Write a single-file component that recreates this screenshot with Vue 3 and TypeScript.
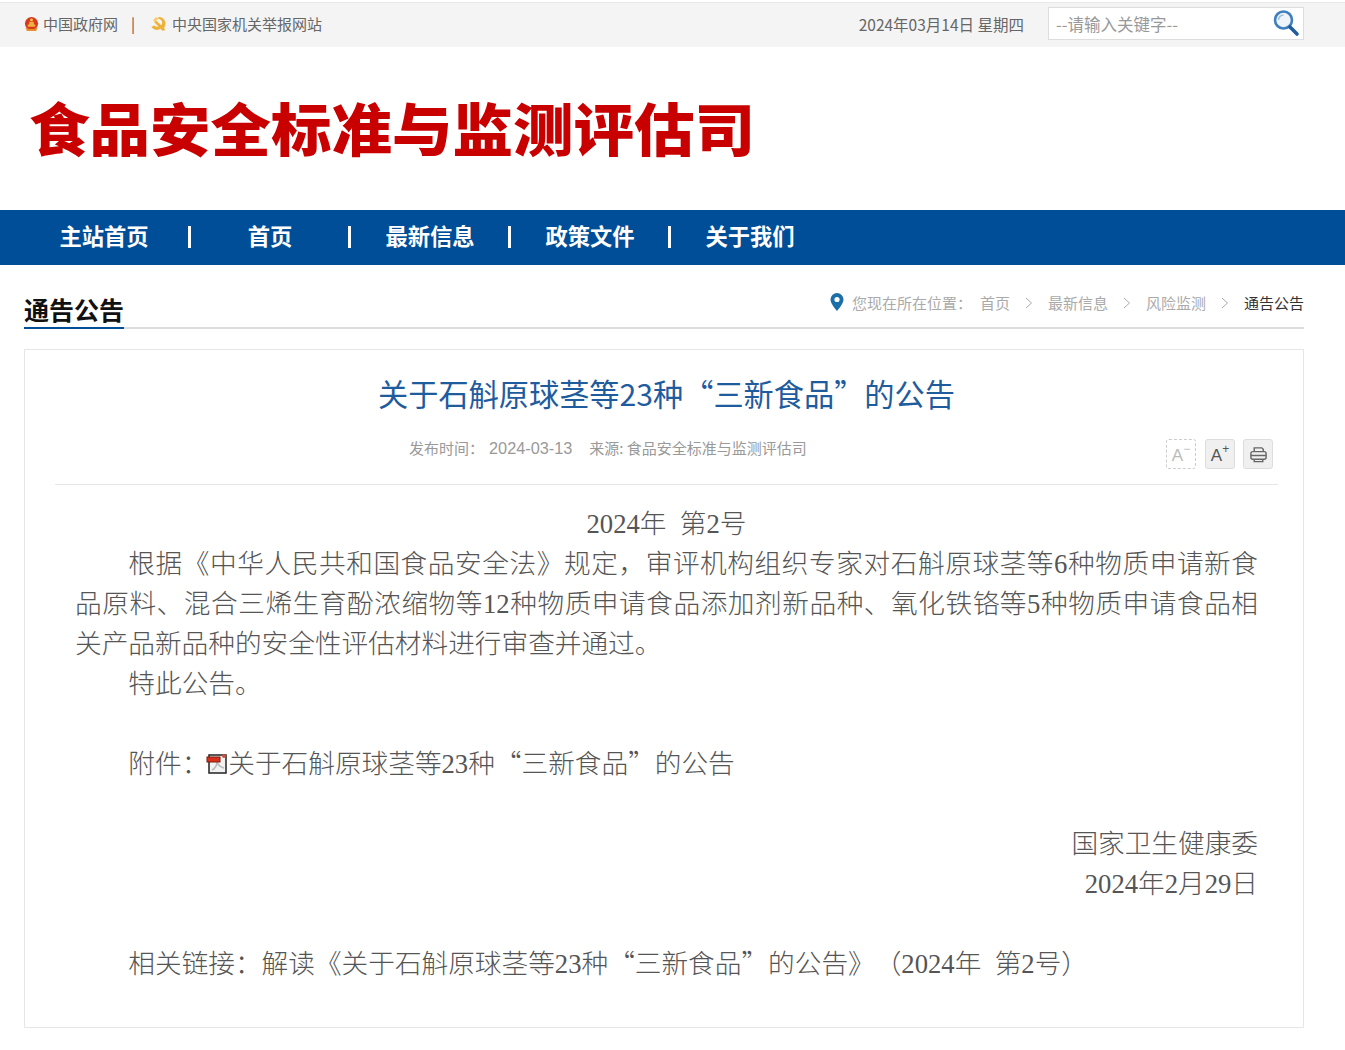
<template>
  <div class="page">
    <div class="topbar">
      <div class="top-left">
        <svg class="emblem" viewBox="0 0 16 16" width="15" height="16">
          <circle cx="8" cy="7.500" r="7" fill="#d8381c" />
          <path d="M1.500 11.500c2 2.500 11 2.500 13 0L13 15.500H3z" fill="#e8902a" />
          <path d="M4 8.500h8V11H4zM5.500 5.500h5v3h-5z" fill="#f2b040" />
          <circle cx="8" cy="3.600" r="1.500" fill="#f6d04a" />
        </svg>
        <span class="top-link">中国政府网</span>
        <span class="top-sep">|</span>
        <svg class="party" viewBox="0 0 16 16" width="16" height="15">
          <path d="M9 1a7 7 0 0 1 5.500 11.300L15.500 15.500h-3.500l-1.200-1.800A7.200 7.200 0 0 1 .8 11.500l3.500-1.500a4.200 4.200 0 0 0 4.200 1.300L3.800 6.500 5.500 4.500l6 5.300A4.300 4.300 0 0 0 7 3z" fill="#efb238" />
          <path d="M2.500 4.500 6 1l2.500 2L5 6.500z" fill="#f7cf70" />
        </svg>
        <span class="top-link">中央国家机关举报网站</span>
      </div>
      <div class="top-right">
        <span class="date">2024年03月14日 星期四</span>
        <div class="search">
          <input class="search-input" type="text" placeholder="--请输入关键字--" />
          <svg class="search-icon" viewBox="0 0 28 28" width="28" height="28">
            <circle cx="11.500" cy="11" r="8.500" fill="#eef4fa" stroke="#3f7fbf" stroke-width="2.600" />
            <path d="M6.500 11a5 5 0 0 1 5-5" fill="none" stroke="#9bbfe0" stroke-width="1.500" />
            <path d="M18 18l7 7" stroke="#1f5c9e" stroke-width="3.600" stroke-linecap="round" />
          </svg>
        </div>
      </div>
    </div>

    <div class="masthead">
      <div class="logo-text">食品安全标准与监测评估司</div>
    </div>

    <nav class="nav">
      <ul class="nav-list">
        <li v-for="(item, i) in navItems" :key="item" class="nav-item">
          <span>{{ item }}</span>
          <i v-if="i < navItems.length - 1" class="nav-sep"></i>
        </li>
      </ul>
    </nav>

    <div class="main">
      <div class="section-head">
        <h2 class="section-title">通告公告</h2>
        <div class="crumbs">
          <svg class="pin" viewBox="0 0 14 18" width="14" height="18">
            <path d="M7 0a6.500 6.500 0 0 0-6.500 6.500C.5 11 7 18 7 18s6.500-7 6.500-11.500A6.500 6.500 0 0 0 7 0z" fill="#1d6fa8" />
            <circle cx="7" cy="6.500" r="2.600" fill="#fff" />
          </svg>
          <span class="crumb-label">您现在所在位置：</span>
          <template v-for="(c, i) in crumbs" :key="c">
            <span class="crumb" :class="{ current: i === crumbs.length - 1 }">{{ c }}</span>
            <svg v-if="i < crumbs.length - 1" class="chev" viewBox="0 0 8 12" width="8" height="12">
              <path d="M1 1l5.500 5L1 11" fill="none" stroke="#aaa" stroke-width="1" />
            </svg>
          </template>
        </div>
      </div>

      <div class="card">
        <h1 class="title">关于石斛原球茎等23种“三新食品”的公告</h1>
        <div class="meta-row">
          <div class="meta">
            <span>发布时间：</span>
            <span class="meta-date">2024-03-13</span>
            <span class="meta-src">来源: 食品安全标准与监测评估司</span>
          </div>
          <div class="tools">
            <button class="tool off">
              <span class="tool-a">A</span><span class="tool-sup">−</span>
            </button>
            <button class="tool">
              <span class="tool-a">A</span><span class="tool-sup">+</span>
            </button>
            <button class="tool">
              <svg viewBox="0 0 20 20" width="19" height="19" fill="none" stroke="#666" stroke-width="1.500">
                <path d="M5.500 7V3h8l1.500 1.500V7" />
                <rect x="2" y="7" width="16" height="8" rx="2" />
                <path d="M2 11h16M5.500 15v2.500h9V15" />
              </svg>
            </button>
          </div>
        </div>

        <div class="article">
          <p class="center">2024年&nbsp;&nbsp;第2号</p>
          <p class="indent">根据《中华人民共和国食品安全法》规定，审评机构组织专家对石斛原球茎等6种物质申请新食品原料、混合三烯生育酚浓缩物等12种物质申请食品添加剂新品种、氧化铁铬等5种物质申请食品相关产品新品种的安全性评估材料进行审查并通过。</p>
          <p class="indent">特此公告。</p>
          <p class="blank">&nbsp;</p>
          <p class="indent">
            附件：<svg class="pdf" viewBox="0 0 22 22" width="22" height="22">
              <rect x="3" y="2" width="17" height="18" fill="#f2f2f2" stroke="#222" stroke-width="1.500" />
              <path d="M6 17c3-1 5-5 5-8 1 3 3 5 7 6" fill="none" stroke="#bbb" stroke-width="1.500" />
              <rect x="1" y="4" width="13" height="5" fill="#d8301c" stroke="#7a1a10" />
              <circle cx="18" cy="3" r="2" fill="#c8503c" />
            </svg>关于石斛原球茎等23种<span class="q">“</span>三新食品<span class="q">”</span>的公告
          </p>
          <p class="blank">&nbsp;</p>
          <p class="right">国家卫生健康委</p>
          <p class="right">2024年2月29日</p>
          <p class="blank">&nbsp;</p>
          <p class="indent">相关链接：解读《关于石斛原球茎等23种<span class="q">“</span>三新食品<span class="q">”</span>的公告》（2024年&nbsp;&nbsp;第2号）</p>
        </div>
      </div>
    </div>
  </div>
</template>

<script setup lang="ts">
const navItems: string[] = ['主站首页', '首页', '最新信息', '政策文件', '关于我们']
const crumbs: string[] = ['首页', '最新信息', '风险监测', '通告公告']
</script>

<style>
body {
  background: #fff;
}
</style>

<style scoped>
.page {
  width: 1345px;
  min-height: 1050px;
  padding-top: 2px;
  box-sizing: border-box;
  font-family: "Noto Sans CJK SC", "Liberation Sans", sans-serif;
  color: #333;
}

.topbar {
  height: 45px;
  box-sizing: border-box;
  border-top: 1px solid #e8e8e8;
  background: #f4f4f4;
  padding: 0 41px 3px 24px;
  display: flex;
  justify-content: space-between;
  align-items: center;
}
.top-left {
  display: flex;
  align-items: center;
  font-size: 15px;
  color: #666;
}
.top-link {
  margin-left: 4px;
}
.top-sep {
  margin: 0 15px 0 13px;
  color: #555;
}
.party {
  margin-right: 2px;
}
.top-right {
  display: flex;
  align-items: center;
}
.date {
  font-size: 15.500px;
  color: #666;
  margin-right: 24px;
}
.search {
  width: 256px;
  height: 33px;
  box-sizing: border-box;
  background: #fff;
  border: 1px solid #ddd;
  display: flex;
  align-items: center;
  position: relative;
}
.search-input {
  border: 0;
  outline: 0;
  flex: 1;
  padding: 0 0 0 7px;
  height: 28px;
  font: 16.500px "Noto Sans CJK SC", sans-serif;
  color: #666;
  background: transparent;
}
.search-input::placeholder {
  color: #999;
  opacity: 1;
}
.search-icon {
  position: absolute;
  right: 3px;
  top: 1px;
}

.masthead {
  height: 163px;
  padding: 0 0 4px 29px;
  display: flex;
  align-items: center;
  box-sizing: border-box;
}
.logo-text {
  font-size: 60.500px;
  font-weight: 900;
  line-height: 70px;
  color: #c80000;
  transform: scaleY(0.94);
}

.nav {
  height: 55px;
  background: #004e97;
}
.nav-list {
  list-style: none;
  margin: 0;
  padding: 0 0 0 24px;
  display: flex;
}
.nav-item {
  width: 160px;
  height: 55px;
  box-sizing: border-box;
  padding-bottom: 5px;
  position: relative;
  display: flex;
  align-items: center;
  justify-content: center;
  color: #fff;
  font-size: 22.300px;
  font-weight: 700;
}
.nav-item:first-child {
  width: 166px;
  padding-right: 6px;
}
.nav-sep {
  position: absolute;
  right: -1px;
  top: 16px;
  width: 3px;
  height: 22px;
  background: #fff;
}

.main {
  width: 1280px;
  margin-left: 24px;
}
.section-head {
  height: 64px;
  border-bottom: 2px solid #ddd;
  box-sizing: border-box;
  display: flex;
  justify-content: space-between;
  position: relative;
}
.section-title {
  margin: 0;
  width: 100px;
  height: 64px;
  box-sizing: border-box;
  padding-top: 26px;
  font-size: 25px;
  line-height: 36px;
  font-weight: 700;
  color: #111;
  border-bottom: 2px solid #004e97;
}
.crumbs {
  display: flex;
  align-items: center;
  height: 22px;
  margin-top: 27px;
  font-size: 15px;
  line-height: 20px;
  color: #aaa;
}
.pin {
  margin: -2px 8px 0 0;
}
.crumb-label {
  margin-right: 8px;
}
.crumb.current {
  color: #333;
}
.chev {
  margin: 0 15px;
}

.card {
  margin-top: 20px;
  height: 679px;
  box-sizing: border-box;
  border: 1px solid #e6e6e6;
  padding: 0 25px 0 30px;
}
.title {
  margin: 21px 0 0;
  text-align: center;
  font-size: 30.200px;
  line-height: 44px;
  font-weight: 400;
  color: #1f5c9e;
}
.meta-row {
  margin-top: 23px;
  height: 46px;
  box-sizing: content-box;
  border-bottom: 1px solid #e6e6e6;
  padding-left: 354px;
  position: relative;
  display: flex;
}
.meta {
  font-size: 15px;
  line-height: 22px;
  margin-top: -1px;
  color: #999;
  display: flex;
  align-items: baseline;
}
.meta-date {
  margin-left: 5px;
  font-size: 16.300px;
  font-family: "Liberation Sans", sans-serif;
}
.meta-src {
  margin-left: 17px;
}
.tools {
  position: absolute;
  right: 5px;
  top: 1px;
  display: flex;
  gap: 9px;
}
.tool {
  width: 30px;
  height: 30px;
  padding: 0;
  box-sizing: border-box;
  border: 1px solid #ddd;
  border-radius: 3px;
  background: #f0f0f0;
  display: flex;
  align-items: center;
  justify-content: center;
  color: #555;
  font-family: "Liberation Sans", sans-serif;
}
.tool:last-child {
  margin-left: -1px;
}
.tool.off {
  background: #fff;
  border: 1px dashed #ccc;
  color: #bbb;
}
.tool-a {
  font-size: 17px;
  margin-top: 3px;
}
.tool-sup {
  font-size: 12px;
  margin-top: -10px;
}

.article {
  padding: 19px 20px 0 20px;
  font-family: "Liberation Serif", "Noto Sans CJK SC", serif;
  font-size: 26.670px;
  line-height: 40px;
  font-weight: 300;
  color: #555;
  text-spacing-trim: space-all;
}
.article p {
  margin: 0;
  text-align: justify;
}
.article .center {
  text-align: center;
}
.article .right {
  text-align: right;
}
.article .indent {
  text-indent: 53.340px;
}
.q {
  font-family: "Noto Sans CJK SC", sans-serif;
  line-height: 0;
}
.pdf {
  vertical-align: -2px;
  margin-left: -2px;
}
</style>
